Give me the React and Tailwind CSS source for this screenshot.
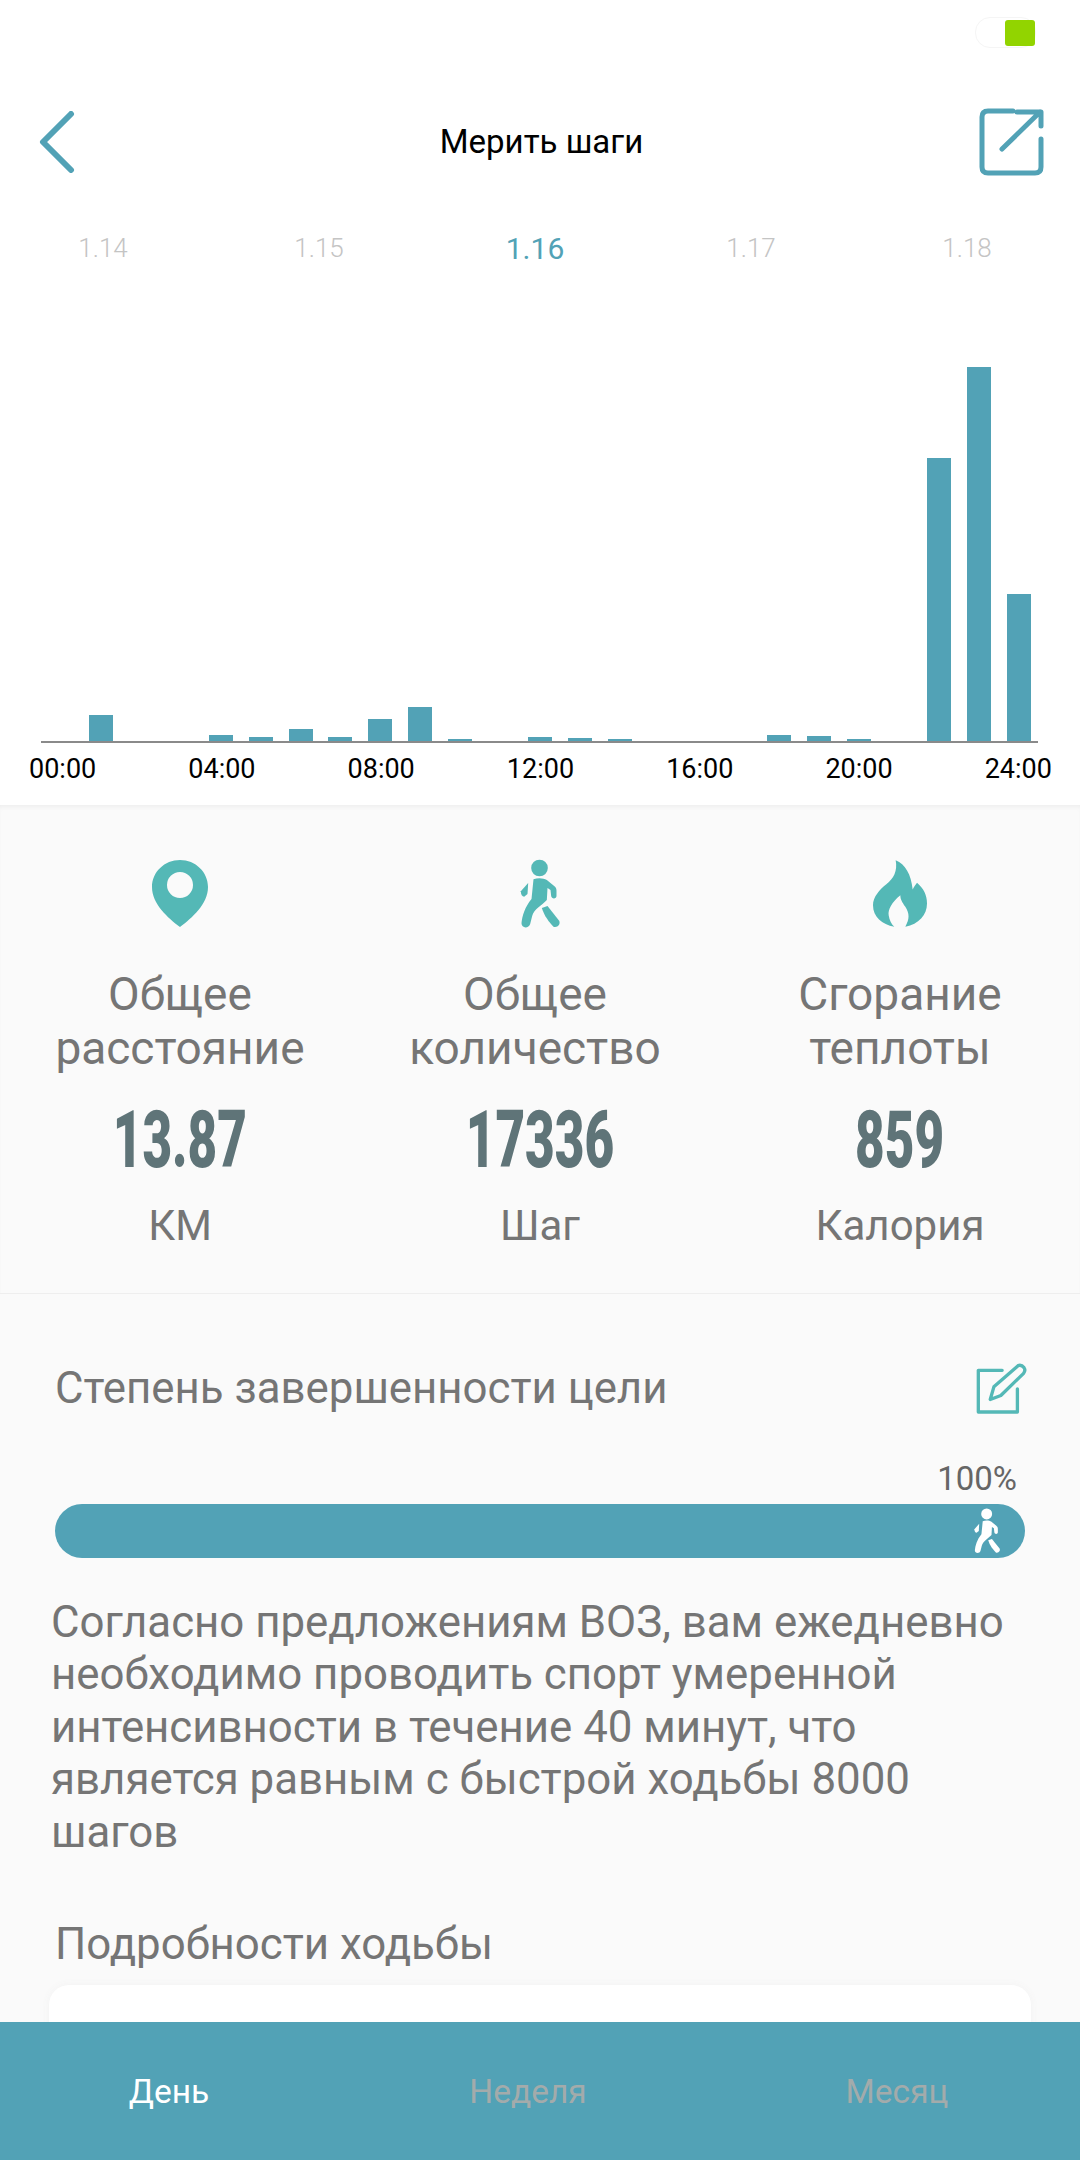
const bars = [26, 0, 0, 6, 4, 12, 4, 22, 34, 2, 0, 4, 3, 2, 0, 0, 0, 6, 5, 2, 0, 283, 374, 147];
const dates = ['1.14', '1.15', '1.16', '1.17', '1.18'];
const times = ['00:00', '04:00', '08:00', '12:00', '16:00', '20:00', '24:00'];

const Walker = ({ className }) => (
  <svg viewBox="85 25 125 210" className={className} fill="currentColor">
    <circle cx="146" cy="52" r="25" />
    <path d="M128 86 C142 80 158 82 168 88 L190 106 C195 110 197 114 197 120 L197 136 C197 146 182 146 181 136 L179 118 L170 112 L168 148 C152 165 130 175 124 196 L118 220 C114 234 92 234 92 218 C94 195 102 170 122 145 Z" />
    <path d="M112 97 L90 122 C90 132 94 138 100 138 L110 130 Z" />
    <path d="M153 172 L170 166 L205 210 C210 220 200 232 188 228 C175 215 160 195 153 172 Z" />
  </svg>
);

const Pin = () => (
  <svg viewBox="0 0 56 67" className="w-[56px] h-[67px]" fill="#54b8b6">
    <path fillRule="evenodd" d="M28 0 C12.5 0 0 12 0 27 C0 44 16 58 28 67 C40 58 56 44 56 27 C56 12 43.5 0 28 0 Z M28 12 A13 13 0 1 1 28 38 A13 13 0 1 1 28 12 Z" />
  </svg>
);

const Flame = () => (
  <svg viewBox="68 30 162 200" className="w-[54px] h-[67px]" fill="#54b8b6">
    <path d="M136 30 C165 42 182 72 187 118 C191 110 196 104 200 98 C220 115 230 135 230 160 C230 195 205 222 165 230 C178 205 178 192 165 170 C155 155 150 148 150 135 C125 155 112 178 115 195 C117 210 124 222 132 230 C95 222 68 200 68 165 C68 140 88 118 108 102 C130 85 142 62 136 30 Z" />
  </svg>
);

const Stat = ({ icon, lines, value, unit, shift }) => (
  <div className="flex flex-col items-center">
    <div className="h-[67px] flex items-center justify-center">{icon}</div>
    <div className={`mt-[40px] text-center text-[46px] leading-[54px] text-[#757575] whitespace-nowrap ${shift}`}>
      {lines.map((l) => <div key={l}>{l}</div>)}
    </div>
    <div className="mt-[20px] h-[90px] flex items-center justify-center">
      <span className="inline-block text-[80px] leading-[90px] font-black text-[#5f7478] scale-x-[.64] whitespace-nowrap">{value}</span>
    </div>
    <div className="mt-[16px] text-[42px] leading-[50px] text-[#757575]">{unit}</div>
  </div>
);

export default function App() {
  return (
    <div className="h-[2160px] flex flex-col overflow-hidden bg-[#fafafa] font-[Roboto,sans-serif]">
      <div className="flex-1 overflow-hidden">
        {/* top panel */}
        <div className="bg-white h-[805px] flex flex-col">
          <div className="h-[100px] flex justify-end pt-[17px] pr-[44px]">
            <div className="w-[61px] h-[31px] rounded-[15px] border border-[#f5f5f5] flex justify-end items-center">
              <div className="w-[30px] h-[26px] rounded-[3px] bg-[#92d400]" />
            </div>
          </div>
          <div className="h-[84px] grid grid-cols-[1fr_auto_1fr] items-center pl-[39px] pr-[36px]">
            <svg viewBox="0 0 36 62" className="w-[36px] h-[62px]" fill="none" stroke="#52a2b6" strokeWidth="6" strokeLinecap="round" strokeLinejoin="round">
              <path d="M32 3 L4 31 L32 59" />
            </svg>
            <div className="text-[33px] text-black">Мерить шаги</div>
            <svg viewBox="0 0 65 68" className="w-[65px] h-[68px] justify-self-end" fill="none" stroke="#52a2b6" strokeWidth="5" strokeLinecap="round" strokeLinejoin="round">
              <path d="M34 3 H9 Q3 3 3 9 V59 Q3 65 9 65 H56 Q62 65 62 59 V31" />
              <path d="M23 41 L61 4 M38 4 H62 V18" />
            </svg>
          </div>
          <div className="h-[128px] -ml-[5px] grid grid-cols-[repeat(5,216px)] items-center text-center">
            {dates.map((d) => (
              <div key={d} className={d === '1.16' ? 'text-[30px] text-[#52a2b6]' : 'text-[26px] font-light text-[#c4c4c4]'}>{d}</div>
            ))}
          </div>
          <div className="h-[431px] mx-[41px] w-[997px] border-b-2 border-[#8a8a8a] flex items-end gap-[15.92px] pl-[48px]">
            {bars.map((h, i) => (
              <div key={i} className="w-[24px] shrink-0 bg-[#52a2b6]" style={{ height: h }} />
            ))}
          </div>
          <div className="flex justify-between pl-[29px] pr-[28px] pt-[10px] text-[27px] leading-[32px] text-black">
            {times.map((t) => <div key={t}>{t}</div>)}
          </div>
        </div>

        {/* totals */}
        <div className="h-[489px] pt-[55px] grid grid-cols-3 border-b border-[#eeeeee] shadow-[inset_0_4px_4px_-2px_#eeeeee]">
          <Stat icon={<Pin />} lines={['Общее', 'расстояние']} value="13.87" unit="КМ" shift="" />
          <Stat icon={<Walker className="w-[42px] h-[70px] text-[#54b8b6]" />} lines={['Общее', 'количество']} value="17336" unit="Шаг" shift="pr-[10px]" />
          <Stat icon={<Flame />} lines={['Сгорание', 'теплоты']} value="859" unit="Калория" shift="" />
        </div>

        {/* goal */}
        <div className="pt-[65px]">
          <div className="flex items-center justify-between pl-[55px] pr-[52px] h-[60px]">
            <div className="text-[43.8px] text-[#757575] whitespace-nowrap">Степень завершенности цели</div>
            <svg viewBox="220 60 160 160" className="w-[53px] h-[53px]" fill="none" stroke="#54b8b6" strokeWidth="10" strokeLinejoin="round" strokeLinecap="round">
              <path d="M302 82 H230 V208 H348 V138" />
              <path d="M266 170 L277 132 L350 68 Q360 64 368 74 Q374 82 366 92 L298 158 Z" />
            </svg>
          </div>
          <div className="mt-[42px] text-right pr-[63px] text-[33px] leading-[36px] text-[#666666]">100%</div>
          <div className="mt-[7px] mx-[55px] h-[54px] rounded-full bg-[#52a2b6] flex items-center justify-end pr-[24px]">
            <Walker className="w-[28px] h-[46px] text-white" />
          </div>
          <p className="mt-[38px] pl-[51px] pr-[40px] text-[43.8px] leading-[52.4px] text-[#757575]">
            Согласно предложениям ВОЗ, вам ежедневно необходимо проводить спорт умеренной интенсивности в течение 40 минут, что является равным с быстрой ходьбы 8000 шагов
          </p>
          <div className="mt-[60px] pl-[55px] text-[43.8px] leading-[52px] text-[#757575]">Подробности ходьбы</div>
          <div className="mt-[15px] mx-[49px] h-[120px] rounded-[20px] bg-white shadow-[0_0_8px_#f2f2f2]" />
        </div>
      </div>

      {/* tabs */}
      <div className="h-[138px] shrink-0 pt-[3px] bg-[#52a2b6] grid grid-cols-3 items-center text-center text-[33.5px]">
        <div className="pr-[22px] text-white">День</div>
        <div className="pr-[24px] text-[#a3abab]">Неделя</div>
        <div className="pr-[6px] text-[#a3abab]">Месяц</div>
      </div>
    </div>
  );
}
